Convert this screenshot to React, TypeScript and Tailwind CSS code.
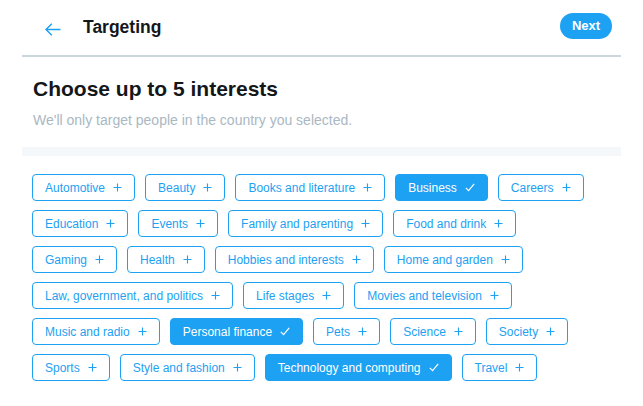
import React from "react";

const rows: { label: string; selected?: boolean }[][] = [
  [
    { label: "Automotive" },
    { label: "Beauty" },
    { label: "Books and literature" },
    { label: "Business", selected: true },
    { label: "Careers" },
  ],
  [
    { label: "Education" },
    { label: "Events" },
    { label: "Family and parenting" },
    { label: "Food and drink" },
  ],
  [
    { label: "Gaming" },
    { label: "Health" },
    { label: "Hobbies and interests" },
    { label: "Home and garden" },
  ],
  [
    { label: "Law, government, and politics" },
    { label: "Life stages" },
    { label: "Movies and television" },
  ],
  [
    { label: "Music and radio" },
    { label: "Personal finance", selected: true },
    { label: "Pets" },
    { label: "Science" },
    { label: "Society" },
  ],
  [
    { label: "Sports" },
    { label: "Style and fashion" },
    { label: "Technology and computing", selected: true },
    { label: "Travel" },
  ],
];

function Plus() {
  return (
    <svg width="9" height="9" viewBox="0 0 9 9" fill="none">
      <path d="M4.5 0.5V8.5M0.5 4.5H8.5" stroke="currentColor" strokeWidth="1.1" />
    </svg>
  );
}

function Check() {
  return (
    <svg width="10" height="9" viewBox="0 0 10 9" fill="none">
      <path d="M0.8 4.8L3.6 7.6L9.2 0.8" stroke="currentColor" strokeWidth="1.2" />
    </svg>
  );
}

function Chip({ label, selected }: { label: string; selected?: boolean }) {
  return (
    <div
      className={
        selected
          ? "flex h-[27px] items-center gap-[8px] rounded-[4px] border border-[#1da1f2] bg-[#1da1f2] px-[12px] text-[12px] text-white"
          : "flex h-[27px] items-center gap-[8px] rounded-[4px] border border-[#1da1f2] bg-white px-[12px] text-[12px] text-[#1da1f2]"
      }
    >
      <span className="leading-[14px] whitespace-nowrap">{label}</span>
      {selected ? <Check /> : <Plus />}
    </div>
  );
}

export default function App() {
  return (
    <div
      className="h-[406px] w-[643px] overflow-hidden bg-white"
      style={{ fontFamily: '"Liberation Sans", Arial, sans-serif' }}
    >
      <div className="flex h-[55px] items-center pl-[45px] pr-[31px]">
        <svg width="16" height="13" viewBox="0 0 16 13" fill="none" className="mt-[4px] text-[#1da1f2]">
          <path d="M15.5 6.5H1M6.8 0.8L1 6.5L6.8 12.2" stroke="currentColor" strokeWidth="1.5" />
        </svg>
        <div className="ml-[22px] text-[17.5px] font-bold leading-[22px] text-[#14171a] mb-[1px]">Targeting</div>
        <div className="flex-1" />
        <button className="flex h-[26px] w-[52px] items-center justify-center rounded-full bg-[#1da1f2] text-[13px] font-bold text-white mt-[-3px]">
          Next
        </button>
      </div>
      <div className="mx-[22px] h-[2px] bg-[#ccd6dd]" />
      <div className="px-[33px] pt-[19px]">
        <div className="text-[21px] font-bold leading-[25px] text-[#14171a]">Choose up to 5 interests</div>
        <div className="mt-[9px] text-[14px] leading-[20px] text-[#aab8c2]">
          We'll only target people in the country you selected.
        </div>
      </div>
      <div className="mx-[22px] mt-[17px] h-[9px] bg-[#f5f8fa]" />
      <div className="mt-[18px] flex flex-col gap-[9px] pl-[32px]">
        {rows.map((row, i) => (
          <div key={i} className="flex gap-[10px]">
            {row.map((c) => (
              <Chip key={c.label} label={c.label} selected={c.selected} />
            ))}
          </div>
        ))}
      </div>
    </div>
  );
}
